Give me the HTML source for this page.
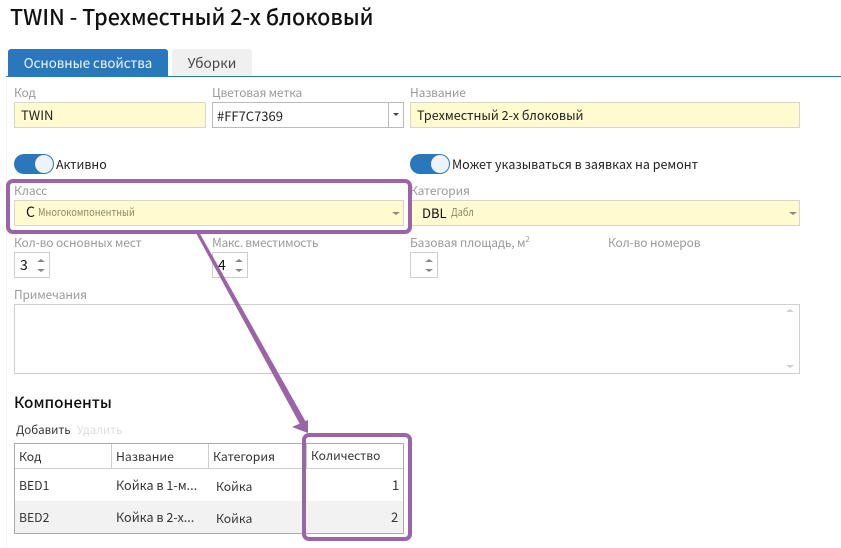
<!DOCTYPE html>
<html><head><meta charset="utf-8">
<style>
html,body{margin:0;padding:0;background:#fff}
body{width:841px;height:548px;position:relative;overflow:hidden;font-family:"Noto Sans CJK SC","Liberation Sans",sans-serif;font-size:13px;color:#222}
.a{position:absolute;white-space:nowrap}
.l{position:absolute;white-space:nowrap;color:#9a9a9a;font-size:12px;letter-spacing:-.15px;line-height:16px}
.b{position:absolute;box-sizing:border-box;border:1px solid #cfcfcf;background:#fff}
.y{background:#fffacf;border-color:#d8d8c8}
.t{position:absolute;white-space:nowrap;font-size:12.6px;line-height:18px;color:#222}
.c{position:absolute;white-space:nowrap;font-size:12.2px;line-height:18px;color:#333}
.tg{position:absolute;width:40px;height:20px;border-radius:10px;background:#2b77bb}
.tg i{position:absolute;right:1px;top:1px;width:18px;height:18px;border-radius:9px;background:#eef3f9}
.up{position:absolute;width:0;height:0;border-left:4px solid transparent;border-right:4px solid transparent;border-bottom:3px solid #888}
.dn{position:absolute;width:0;height:0;border-left:4px solid transparent;border-right:4px solid transparent;border-top:3px solid #888}
.v{position:absolute;width:1px;background:#cfcfcf}
.h{position:absolute;height:1px;background:#cfcfcf}
.s{position:absolute;white-space:nowrap;font-size:10.5px;line-height:16px;color:#8a8a60;transform:scaleX(.88);transform-origin:left center}
</style></head><body>
<div class="a" style="left:10px;top:3px;font-size:21.5px;line-height:28px;color:#111;font-weight:500">TWIN - Трехместный 2-х блоковый</div>

<div class="a" style="left:6px;top:77px;width:1px;height:471px;background:#f3f3f3"></div>
<div class="a" style="left:8px;top:49px;width:160px;height:27px;background:#2b77bb;border-radius:3px 3px 0 0;color:#f0f5fa;text-align:center;line-height:27px;font-size:13.3px">Основные свойства</div>
<div class="a" style="left:172px;top:49px;width:80px;height:27px;background:#f0f0f0;border-radius:3px 3px 0 0;color:#444;text-align:center;line-height:27px;font-size:13.6px">Уборки</div>
<div class="a" style="left:6px;top:76px;width:835px;height:1px;background:#2b77bb"></div>

<div class="l" style="left:14px;top:85px">Код</div>
<div class="b y" style="left:14px;top:102px;width:192px;height:26px"></div>
<div class="t" style="left:21px;top:106px;font-size:13px">TWIN</div>

<div class="l" style="left:212px;top:85px;letter-spacing:-.2px">Цветовая метка</div>
<div class="b" style="left:212px;top:102px;width:192px;height:26px;border-color:#bbb"></div>
<div class="v" style="left:388px;top:102px;height:26px;background:#bbb"></div>
<div class="t" style="left:217px;top:107px;font-size:13px">#FF7C7369</div>
<div class="dn" style="left:393px;top:113px;border-left-width:3px;border-right-width:3px;border-top-color:#444"></div>

<div class="l" style="left:410px;top:85px">Название</div>
<div class="b y" style="left:410px;top:102px;width:390px;height:26px"></div>
<div class="t" style="left:417px;top:106px">Трехместный 2-х блоковый</div>

<div class="tg" style="left:14px;top:154px"><i></i></div>
<div class="t" style="left:56px;top:155px;font-size:12.4px">Активно</div>
<div class="tg" style="left:410px;top:154px"><i></i></div>
<div class="t" style="left:452px;top:155px;font-size:12.5px">Может указываться в заявках на ремонт</div>

<div class="l" style="left:14px;top:183px">Класс</div>
<div class="b y" style="left:14px;top:200px;width:390px;height:26px"></div>
<div class="t" style="left:26px;top:203px;font-size:14px;color:#111">С</div>
<div class="s" style="left:38px;top:205px">Многокомпонентный</div>
<div class="dn" style="left:392px;top:212px;border-top-color:#8a8a78"></div>

<div class="l" style="left:410px;top:183px">Категория</div>
<div class="b y" style="left:410px;top:200px;width:390px;height:26px"></div>
<div class="t" style="left:422px;top:204px;font-size:13px;color:#111">DBL</div>
<div class="s" style="left:451px;top:205px">Дабл</div>
<div class="dn" style="left:789px;top:212px;border-top-color:#8a8a78"></div>

<div class="l" style="left:14px;top:235px">Кол-во основных мест</div>
<div class="b" style="left:14px;top:252px;width:36px;height:26px"></div>
<div class="t" style="left:20px;top:256px;font-size:14px;color:#111">3</div>
<div class="up" style="left:37px;top:259px"></div><div class="dn" style="left:37px;top:269px"></div>

<div class="l" style="left:212px;top:235px;letter-spacing:-.3px">Макс. вместимость</div>
<div class="b" style="left:212px;top:252px;width:36px;height:26px"></div>
<div class="t" style="left:218px;top:256px;font-size:14px;color:#111">4</div>
<div class="up" style="left:235px;top:259px"></div><div class="dn" style="left:235px;top:269px"></div>

<div class="l" style="left:410px;top:235px">Базовая площадь, м<sup style="font-size:8px;line-height:0">2</sup></div>
<div class="b" style="left:410px;top:252px;width:28px;height:26px"></div>
<div class="up" style="left:425px;top:259px"></div><div class="dn" style="left:425px;top:269px"></div>

<div class="l" style="left:608px;top:235px">Кол-во номеров</div>

<div class="l" style="left:14px;top:287px">Примечания</div>
<div class="b" style="left:14px;top:304px;width:786px;height:70px"></div>
<div class="up" style="left:786px;top:309px;border-bottom-color:#d0d0d0"></div>
<div class="dn" style="left:786px;top:365px;border-top-color:#d0d0d0"></div>

<div class="a" style="left:14px;top:392px;font-size:15.3px;line-height:20px;color:#111;font-weight:500">Компоненты</div>
<div class="a" style="left:16px;top:422px;font-size:11.5px;line-height:16px;color:#333">Добавить</div>
<div class="a" style="left:77px;top:422px;font-size:11.5px;line-height:16px;color:#ddd">Удалить</div>

<div class="b" style="left:14px;top:443px;width:390px;height:91px;border-color:#aaa"></div>
<div class="a" style="left:15px;top:501px;width:388px;height:32px;background:#f2f2f2"></div>
<div class="h" style="left:15px;top:468px;width:388px"></div>
<div class="v" style="left:111px;top:444px;height:24px"></div>
<div class="v" style="left:208px;top:444px;height:24px"></div>
<div class="v" style="left:306px;top:444px;height:24px"></div>
<div class="c" style="left:19px;top:447px">Код</div>
<div class="c" style="left:116px;top:447px">Название</div>
<div class="c" style="left:213px;top:447px">Категория</div>
<div class="c" style="left:311px;top:447px;font-size:12px">Количество</div>
<div class="c" style="left:19px;top:476px">BED1</div>
<div class="c" style="left:116px;top:476px;font-size:12.6px">Койка в 1-м...</div>
<div class="c" style="left:216px;top:477px">Койка</div>
<div class="c" style="left:392px;top:476px;font-size:13px">1</div>
<div class="c" style="left:19px;top:508px">BED2</div>
<div class="c" style="left:116px;top:508px;font-size:12.6px">Койка в 2-х...</div>
<div class="c" style="left:216px;top:509px">Койка</div>
<div class="c" style="left:391px;top:508px;font-size:13px">2</div>

<svg class="a" style="left:0;top:0" width="841" height="548">
<rect x="8" y="181" width="402" height="51" rx="5" fill="none" stroke="#9b64a6" stroke-width="4"/>
<rect x="304" y="435" width="106" height="104" rx="5" fill="none" stroke="#9b64a6" stroke-width="4"/>
<polygon points="196,233 199,232 307,424 302,428" fill="#9b64a6"/>
<polygon points="308,420 308,433 292,427" fill="#9b64a6"/>
</svg>
</body></html>
